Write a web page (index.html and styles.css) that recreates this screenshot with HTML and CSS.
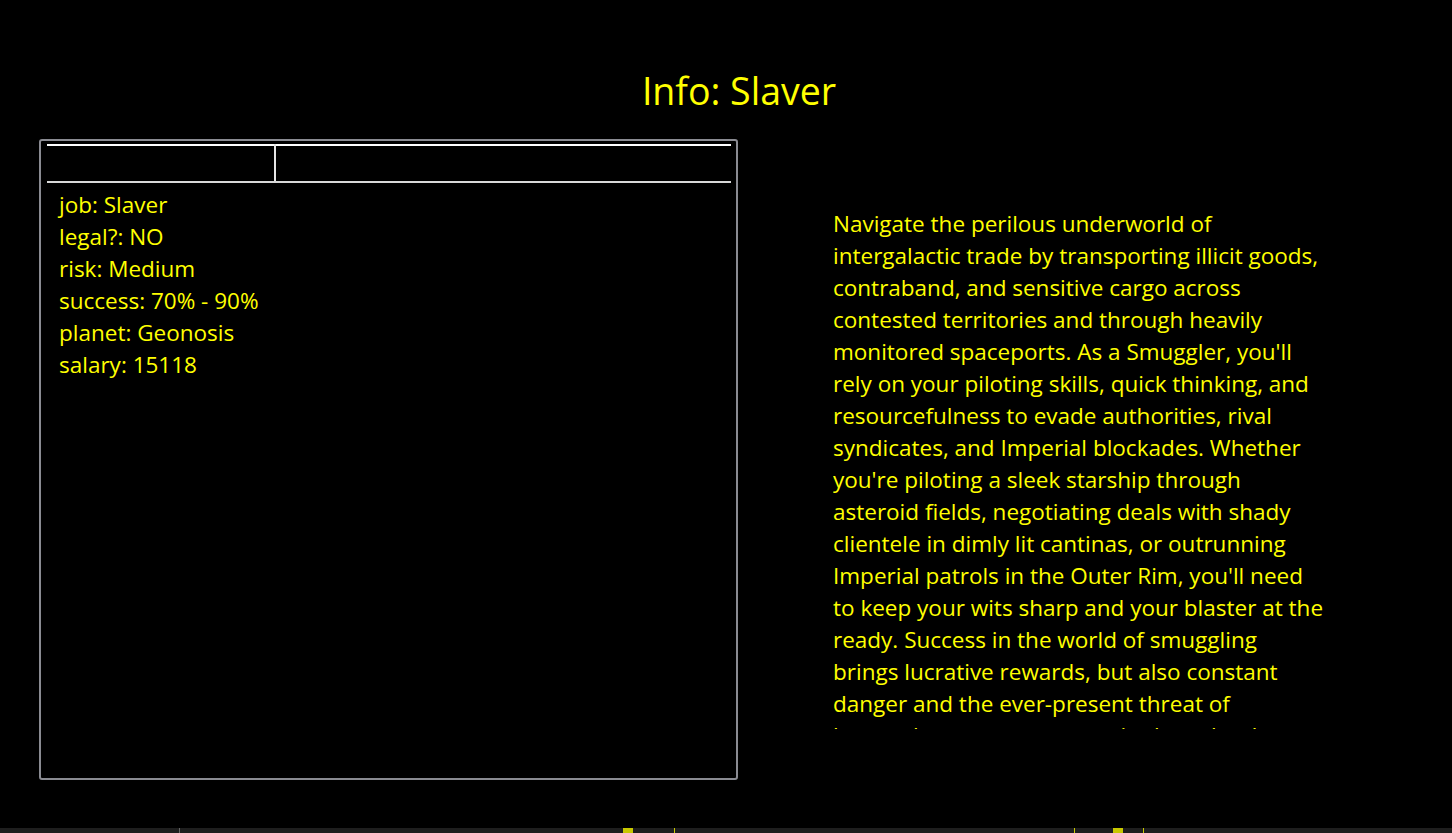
FILE: index.html
```html
<!DOCTYPE html>
<html>
<head>
<meta charset="utf-8">
<link rel="stylesheet" href="styles.css">
</head>
<body>
<div class="page">
  <h1 class="title">Info: Slaver</h1>
  <div class="content">
    <div class="panel">
      <table class="grid">
        <thead>
          <tr><th class="c1"></th><th class="c2"></th></tr>
        </thead>
      </table>
      <div class="stats">
        <div>job: Slaver</div>
        <div>legal?: NO</div>
        <div>risk: Medium</div>
        <div>success: 70% - 90%</div>
        <div>planet: Geonosis</div>
        <div>salary: 15118</div>
      </div>
    </div>
    <div class="desc">
      <p>Navigate the perilous underworld of intergalactic trade by transporting illicit goods, contraband, and sensitive cargo across contested territories and through heavily monitored spaceports. As a Smuggler, you'll rely on your piloting skills, quick thinking, and resourcefulness to evade authorities, rival syndicates, and Imperial blockades. Whether you're piloting a sleek starship through asteroid fields, negotiating deals with shady clientele in dimly lit cantinas, or outrunning Imperial patrols in the Outer Rim, you'll need to keep your wits sharp and your blaster at the ready. Success in the world of smuggling brings lucrative rewards, but also constant danger and the ever-present threat of betrayal, capture, or worse in the galaxy's shadowy corners.</p>
    </div>
  </div>
  <div class="strip">
    <span class="tick t1"></span>
    <span class="mark m1"></span>
    <span class="line l1"></span>
    <span class="line l2"></span>
    <span class="mark m2"></span>
    <span class="line l3"></span>
  </div>
</div>
</body>
</html>
```

FILE: styles.css
```css
html, body {
  margin: 0;
  padding: 0;
  background: #000;
}
.page {
  height: 833px;
  display: flex;
  flex-direction: column;
  font-family: "Open Sans", "Noto Sans", sans-serif;
  color: #ffff00;
  position: relative;
  overflow: hidden;
}
.title {
  margin: 66px 0 0 0;
  height: 50px;
  font-weight: normal;
  font-size: 37.5px;
  line-height: 50px;
  text-align: center;
  padding-left: 26px;
}
.content {
  display: flex;
  margin-top: 23px;
  padding-left: 39px;
}
.panel {
  width: 684px;
  height: 634px;
  border: 2px solid #8a8b92;
  border-radius: 3px;
  padding: 3px 5px 0 6px;
  box-sizing: content-box;
  flex: none;
}
.grid {
  width: 684px;
  border-collapse: collapse;
}
.grid th {
  height: 35px;
  border-top: 2px solid #ffffff;
  border-bottom: 2px solid #d8d8d8;
  padding: 0;
}
.grid th.c1 {
  width: 227px;
  border-right: 2px solid #e6e6e6;
}
.stats {
  padding: 6px 0 0 12px;
  font-size: 22.5px;
  line-height: 32px;
}
.desc {
  margin-left: 95px;
  margin-top: 69px;
  width: 492px;
  height: 521px;
  overflow: hidden;
  flex: none;
}
.desc p {
  margin: 0;
  font-size: 22.5px;
  line-height: 32px;
}
.strip {
  position: absolute;
  left: 0;
  right: 0;
  bottom: 0;
  height: 5px;
  background: #1e1e1e;
}
.strip span {
  position: absolute;
  top: 0;
  bottom: 0;
}
.tick.t1 { left: 179px; width: 1px; background: #666; }
.mark { background: #c8c800; width: 10px; }
.mark.m1 { left: 623px; }
.mark.m2 { left: 1113px; }
.line { width: 1px; background: #c8c800; }
.line.l1 { left: 674px; }
.line.l2 { left: 1074px; }
.line.l3 { left: 1143px; }
```
